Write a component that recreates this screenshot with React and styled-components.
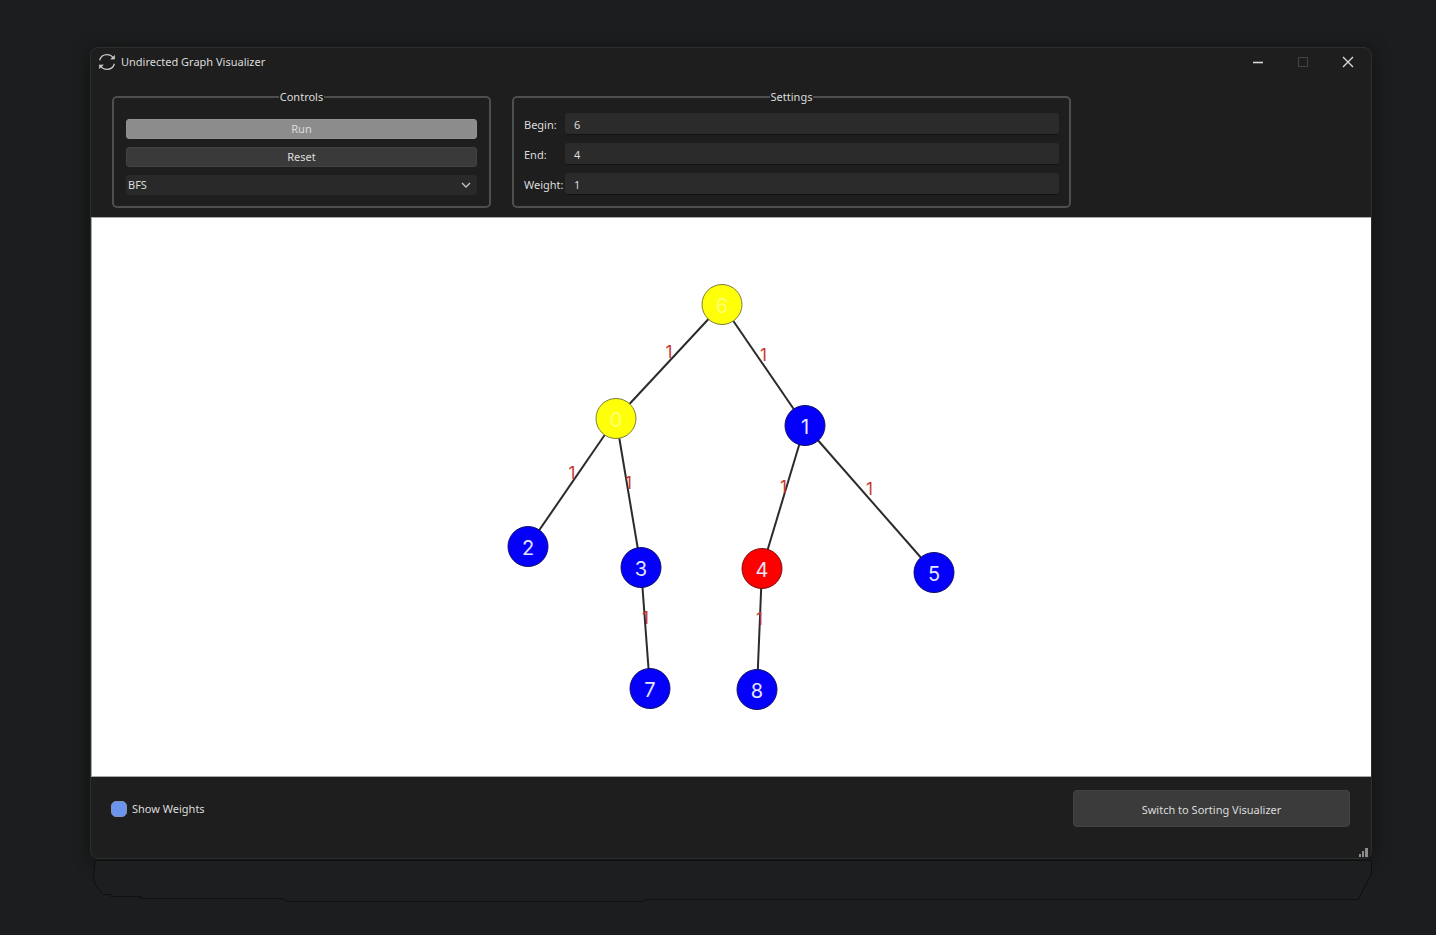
import { useState } from "react";
import styled, { createGlobalStyle } from "styled-components";

const nodes = [
    { id: 6, x: 630, y: 86, state: "visited" },
    { id: 0, x: 524, y: 200, state: "visited" },
    { id: 1, x: 713, y: 207, state: "idle" },
    { id: 2, x: 436, y: 328, state: "idle" },
    { id: 3, x: 549, y: 349, state: "idle" },
    { id: 4, x: 670, y: 350, state: "target" },
    { id: 5, x: 842, y: 354, state: "idle" },
    { id: 7, x: 558, y: 470, state: "idle" },
    { id: 8, x: 665, y: 471, state: "idle" },
];

const edges = [
    { from: 6, to: 0, weight: 1 },
    { from: 6, to: 1, weight: 1 },
    { from: 0, to: 2, weight: 1 },
    { from: 0, to: 3, weight: 1 },
    { from: 1, to: 4, weight: 1 },
    { from: 1, to: 5, weight: 1 },
    { from: 3, to: 7, weight: 1 },
    { from: 4, to: 8, weight: 1 },
];

const fills = { visited: "#ffff0a", idle: "#0400fa", target: "#fd0000" };
const strokes = { visited: "#7d7d3c", idle: "#10106a", target: "#7a1010" };

const findNode = (id) => nodes.find((node) => node.id === id);

const Graph = ({ showWeights }) => (
    <GraphSvg viewBox="0 0 1279 557" role="img" aria-label="Graph">
        {edges.map(({ from, to }) => {
            const a = findNode(from);
            const b = findNode(to);
            return <Edge key={`${from}-${to}`} x1={a.x} y1={a.y} x2={b.x} y2={b.y} />;
        })}
        {showWeights && edges.map(({ from, to, weight }) => {
            const a = findNode(from);
            const b = findNode(to);
            return (
                <Weight key={`${from}-${to}`} x={(a.x + b.x) / 2} y={(a.y + b.y) / 2 - 4}>
                    {weight}
                </Weight>
            );
        })}
        {nodes.map(({ id, x, y, state }) => (
            <g key={id}>
                <Circle cx={x} cy={y} r="20" $state={state} />
                <NodeLabel x={x} y={y + 8} $state={state}>{id}</NodeLabel>
            </g>
        ))}
    </GraphSvg>
);

const App = () => {
    const [algorithm, setAlgorithm] = useState("BFS");
    const [begin, setBegin] = useState("6");
    const [end, setEnd] = useState("4");
    const [weight, setWeight] = useState("1");
    const [showWeights, setShowWeights] = useState(true);

    return (
        <Desktop>
            <GlobalStyle />
            <Window>
                <TitleBar>
                    <svg width="18" height="18" viewBox="0 0 18 18" fill="none" stroke="#c8c8c8" strokeWidth="1.3">
                        <path d="M1.6 7.2C2.6 3.7 5.4 1.6 9 1.6c2.9 0 5 1.3 6.3 3.5" />
                        <path d="M16.4 10.8c-1 3.5-3.8 5.6-7.4 5.6-2.9 0-5-1.3-6.3-3.5" />
                        <path d="M16.6 2.4v3.7h-3.9zM1.4 15.6v-3.7h3.9z" fill="#c8c8c8" strokeWidth="0.6" />
                    </svg>
                    <Title>Undirected Graph Visualizer</Title>
                    <WindowButton aria-label="Minimize">
                        <svg width="12" height="12" viewBox="0 0 12 12" stroke="#d8d8d8" strokeWidth="1.6">
                            <path d="M1 6.5h10" />
                        </svg>
                    </WindowButton>
                    <WindowButton aria-label="Maximize" disabled>
                        <svg width="12" height="12" viewBox="0 0 12 12" fill="none" stroke="#454545">
                            <path d="M1.5 1.5h9v9h-9z" />
                        </svg>
                    </WindowButton>
                    <WindowButton aria-label="Close">
                        <svg width="12" height="12" viewBox="0 0 12 12" stroke="#d8d8d8" strokeWidth="1.4">
                            <path d="M1 1l10 10M11 1L1 11" />
                        </svg>
                    </WindowButton>
                </TitleBar>

                <Panels>
                    <ControlsGroup>
                        <Legend>Controls</Legend>
                        <PushButton $pressed>Run</PushButton>
                        <PushButton>Reset</PushButton>
                        <SelectWrap>
                            <Select aria-label="Algorithm" value={algorithm} onChange={(e) => setAlgorithm(e.target.value)}>
                                <option>BFS</option>
                                <option>DFS</option>
                            </Select>
                            <svg width="10" height="6" viewBox="0 0 10 6" fill="none" stroke="#c4c4c4" strokeWidth="1.3">
                                <path d="M1 1l4 4 4-4" />
                            </svg>
                        </SelectWrap>
                    </ControlsGroup>
                    <SettingsGroup>
                        <Legend>Settings</Legend>
                        <Field>
                            <label htmlFor="begin">Begin:</label>
                            <Input id="begin" value={begin} onChange={(e) => setBegin(e.target.value)} />
                        </Field>
                        <Field>
                            <label htmlFor="end">End:</label>
                            <Input id="end" value={end} onChange={(e) => setEnd(e.target.value)} />
                        </Field>
                        <Field>
                            <label htmlFor="weight">Weight:</label>
                            <Input id="weight" value={weight} onChange={(e) => setWeight(e.target.value)} />
                        </Field>
                    </SettingsGroup>
                </Panels>

                <Canvas>
                    <Graph showWeights={showWeights} />
                </Canvas>

                <Footer>
                    <CheckLabel>
                        <Checkbox type="checkbox" checked={showWeights} onChange={(e) => setShowWeights(e.target.checked)} />
                        Show Weights
                    </CheckLabel>
                    <SwitchButton>Switch to Sorting Visualizer</SwitchButton>
                </Footer>
                <SizeGrip width="9" height="9" viewBox="0 0 9 9" fill="#8c8c8c">
                    <path d="M0 6h2v3H0zM3 3h2v6H3zM6 0h3v9H6z" />
                </SizeGrip>
            </Window>
            {/* slab under the window */}
            <Slab viewBox="0 0 1282 43" preserveAspectRatio="none">
                <path
                    d="M5 1.5H1281.5V15L1268 40.5H555v2H197l-4-3H51v-2H21v-2h-8L5 25 3.5 16z"
                    fill="#1c1e1f"
                    stroke="#0f1011"
                    vectorEffect="non-scaling-stroke"
                />
            </Slab>
        </Desktop>
    );
};

const GlobalStyle = createGlobalStyle`
    * {
        box-sizing: border-box;
    }

    body {
        margin: 0;
        background: #1b1d1e;
    }

    body, button, input, select {
        font-family: "Noto Sans", "Open Sans", sans-serif;
        font-size: 11px;
        line-height: 14px;
        color: #dcdcdc;
    }
`;

const Desktop = styled.div`
    display: flex;
    flex-direction: column;
    min-height: 100vh;
    padding: 47px 64px 33px 90px;
`;

const Window = styled.main`
    position: relative;
    display: flex;
    flex: 1;
    flex-direction: column;
    background: #1e1e1e;
    border: 1px solid #2d2e2e;
    border-radius: 8px;
    box-shadow: 0 2px 18px rgb(0 0 0 / 45%);
`;

const TitleBar = styled.header`
    display: flex;
    align-items: center;
    height: 28px;
    padding: 0 1px 0 7px;
`;

const Title = styled.h1`
    flex: 1;
    margin: 0 0 0 5px;
    font-size: 11px;
    font-weight: 400;
`;

const WindowButton = styled.button`
    display: grid;
    place-items: center;
    width: 45px;
    height: 28px;
    padding: 0;
    border: 0;
    background: none;
`;

const Panels = styled.section`
    display: grid;
    grid-template-columns: 379fr 559fr 258fr;
    gap: 21px;
    padding: 14px 21px 9px;
`;

const Group = styled.fieldset`
    min-width: 0;
    margin: 0;
    border: 2px solid #4e4e4e;
    border-radius: 5px;
`;

const ControlsGroup = styled(Group)`
    display: grid;
    gap: 8px;
    padding: 15px 12px 11px;
`;

const SettingsGroup = styled(Group)`
    display: grid;
    gap: 8px;
    padding: 9px 10px 11px;
`;

const Legend = styled.legend`
    margin: 0 auto;
    padding: 0 1px;
`;

const PushButton = styled.button`
    height: 20px;
    padding: 0;
    border: 1px solid ${({ $pressed }) => ($pressed ? "#929292" : "#424242")};
    border-radius: 3px;
    background: ${({ $pressed }) => ($pressed ? "#8c8c8c" : "#3a3a3a")};
`;

const SelectWrap = styled.div`
    display: grid;
    grid-template-columns: 1fr 10px 6px;
    align-items: center;
    border-radius: 3px;
    background: #292929;
`;

const Select = styled.select`
    grid-area: 1 / 1 / 2 / 4;
    height: 20px;
    padding: 0 2px;
    border: 0;
    appearance: none;
    background: none;

    & + svg {
        grid-area: 1 / 2;
        pointer-events: none;
    }
`;

const Field = styled.div`
    display: grid;
    grid-template-columns: 41px 1fr;
    align-items: center;
    white-space: nowrap;

    label {
        padding-top: 2px;
    }
`;

const Input = styled.input`
    min-width: 0;
    height: 22px;
    padding: 2px 9px 0;
    border: 0;
    border-bottom: 1px solid #121212;
    border-radius: 3px;
    outline: 0;
    background: #2b2b2b;
`;

const Canvas = styled.section`
    display: flex;
    flex: 1;
    border: 1px solid #a8a8a8;
    border-width: 1px 0 1px 1px;
    background: #fff;
`;

const GraphSvg = styled.svg`
    width: 100%;
    font-family: Inter, "Liberation Sans", sans-serif;
    text-anchor: middle;
`;

const Edge = styled.line`
    stroke: #2b2b2b;
    stroke-width: 2;
`;

const Weight = styled.text`
    font-size: 17px;
    fill: #c8372f;
`;

const Circle = styled.circle`
    fill: ${({ $state }) => fills[$state]};
    stroke: ${({ $state }) => strokes[$state]};
`;

const NodeLabel = styled.text`
    font-size: 20px;
    fill: ${({ $state }) => ($state === "visited" ? "#ffff78" : "#e6e6ff")};
`;

const Footer = styled.footer`
    display: flex;
    align-items: flex-start;
    justify-content: space-between;
    height: 81px;
    padding: 13px 21px 0 20px;
`;

const CheckLabel = styled.label`
    display: flex;
    align-items: center;
    gap: 5px;
    height: 37px;
`;

const Checkbox = styled.input`
    width: 16px;
    height: 16px;
    margin: 0;
    border: 1px solid #8c8c8c;
    border-radius: 5px;
    appearance: none;

    &:checked {
        border-color: #7f92c0;
        background: #6c94ec;
    }
`;

const SwitchButton = styled.button`
    width: 277px;
    height: 37px;
    padding: 2px 0 0;
    border: 1px solid #434343;
    border-radius: 4px;
    background: #3b3b3b;
`;

const SizeGrip = styled.svg`
    position: absolute;
    right: 3px;
    bottom: 1px;
`;

const Slab = styled.svg`
    position: relative;
    display: block;
    width: 100%;
    height: 43px;
`;

export default App;
